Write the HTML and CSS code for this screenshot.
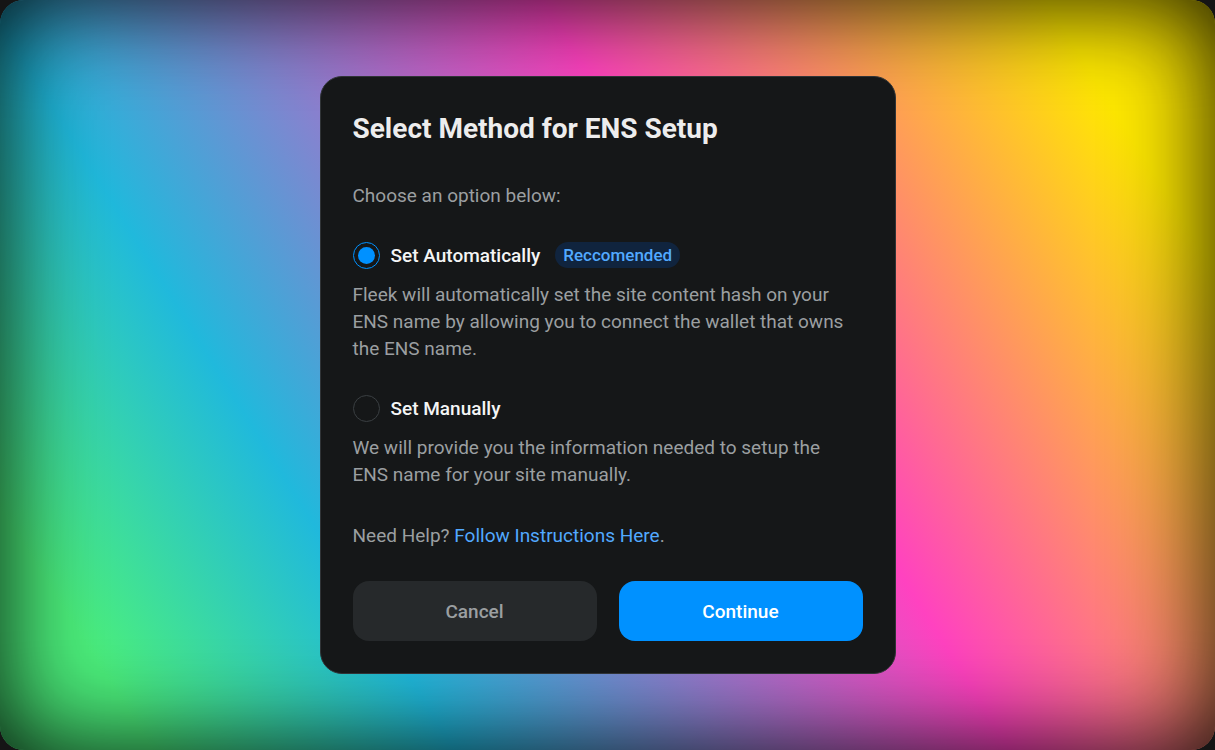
FILE: index.html
```html
<!DOCTYPE html>
<html lang="en">
<head>
<meta charset="utf-8">
<meta name="viewport" content="width=device-width, initial-scale=1">
<title>Select Method for ENS Setup</title>
<link rel="stylesheet" href="styles.css">
</head>
<body>
<main class="backdrop">
  <form class="dialog" role="dialog" aria-labelledby="dialog-title">
    <h1 class="title" id="dialog-title">Select Method for ENS Setup</h1>
    <p class="intro">Choose an option below:</p>
    <section class="option">
      <div class="choice">
        <input class="radio" type="radio" name="method" id="automatic" checked>
        <label class="choice-label" for="automatic">Set Automatically</label>
        <span class="badge">Reccomended</span>
      </div>
      <p class="description">Fleek will automatically set the site content hash on your ENS name by allowing you to connect the wallet that owns the ENS name.</p>
    </section>
    <section class="option">
      <div class="choice">
        <input class="radio" type="radio" name="method" id="manual">
        <label class="choice-label" for="manual">Set Manually</label>
      </div>
      <p class="description">We will provide you the information needed to setup the ENS name for your site manually.</p>
    </section>
    <p class="help">Need Help? <a class="link" href="#">Follow Instructions Here</a>.</p>
    <div class="actions">
      <button class="button cancel" type="button">Cancel</button>
      <button class="button continue" type="button">Continue</button>
    </div>
  </form>
</main>
</body>
</html>
```
FILE: styles.css
```css
* {
  box-sizing: border-box;
}

body {
  margin: 0;
  background: #151515;
  color: #9b9fa1;
  font: 400 19px/27px Roboto, "Noto Sans", sans-serif;
}

h1,
p {
  margin: 0;
}

.backdrop {
  display: flex;
  align-items: center;
  justify-content: center;
  min-height: 100vh;
  padding: 24px;
  border-radius: 24px;
  background: linear-gradient(58deg, #4cf07c 9%, #20b9dc 27%, #ff42c0 60%, #ffe900 90%);
  box-shadow: inset 0 0 100px rgba(0, 0, 0, 0.95);
}

.dialog {
  width: 100%;
  max-width: 576px;
  padding: 32px;
  border: 1px solid #303437;
  border-radius: 22px;
  background: #151718;
}

.title {
  color: #ededed;
  font-size: 28px;
  line-height: 40px;
  font-weight: 700;
}

.intro {
  margin-top: 33px;
}

.option {
  margin-top: 32px;
}

.choice {
  display: flex;
  align-items: center;
  gap: 11px;
  min-height: 28px;
}

.radio {
  flex: none;
  display: grid;
  place-items: center;
  appearance: none;
  width: 27px;
  height: 27px;
  margin: 0;
  border: 1px solid #3a3f42;
  border-radius: 50%;
}

.radio:checked {
  border-color: #0091ff;
}

.radio:checked::before {
  content: "";
  width: 17px;
  height: 17px;
  border-radius: 50%;
  background: #0091ff;
}

.choice-label {
  color: #f4f5f5;
  font-weight: 500;
}

.badge {
  margin-left: 4px;
  padding: 0 8px;
  border-radius: 13px;
  background: #10243e;
  color: #52a9ff;
  font-size: 17px;
  line-height: 26px;
  font-weight: 500;
}

.description {
  margin-top: 12px;
  padding-right: 12px;
}

.help {
  margin-top: 34px;
}

.link {
  color: #52a9ff;
  text-decoration: none;
}

.actions {
  display: grid;
  grid-template-columns: 1fr 1fr;
  gap: 22px;
  margin-top: 32px;
}

.button {
  height: 60px;
  padding: 0 16px;
  border: 0;
  border-radius: 16px;
  font: inherit;
  font-weight: 500;
  cursor: pointer;
}

.cancel {
  background: #26292b;
  color: #9b9fa1;
}

.continue {
  background: #0091ff;
  color: #ffffff;
}
```
